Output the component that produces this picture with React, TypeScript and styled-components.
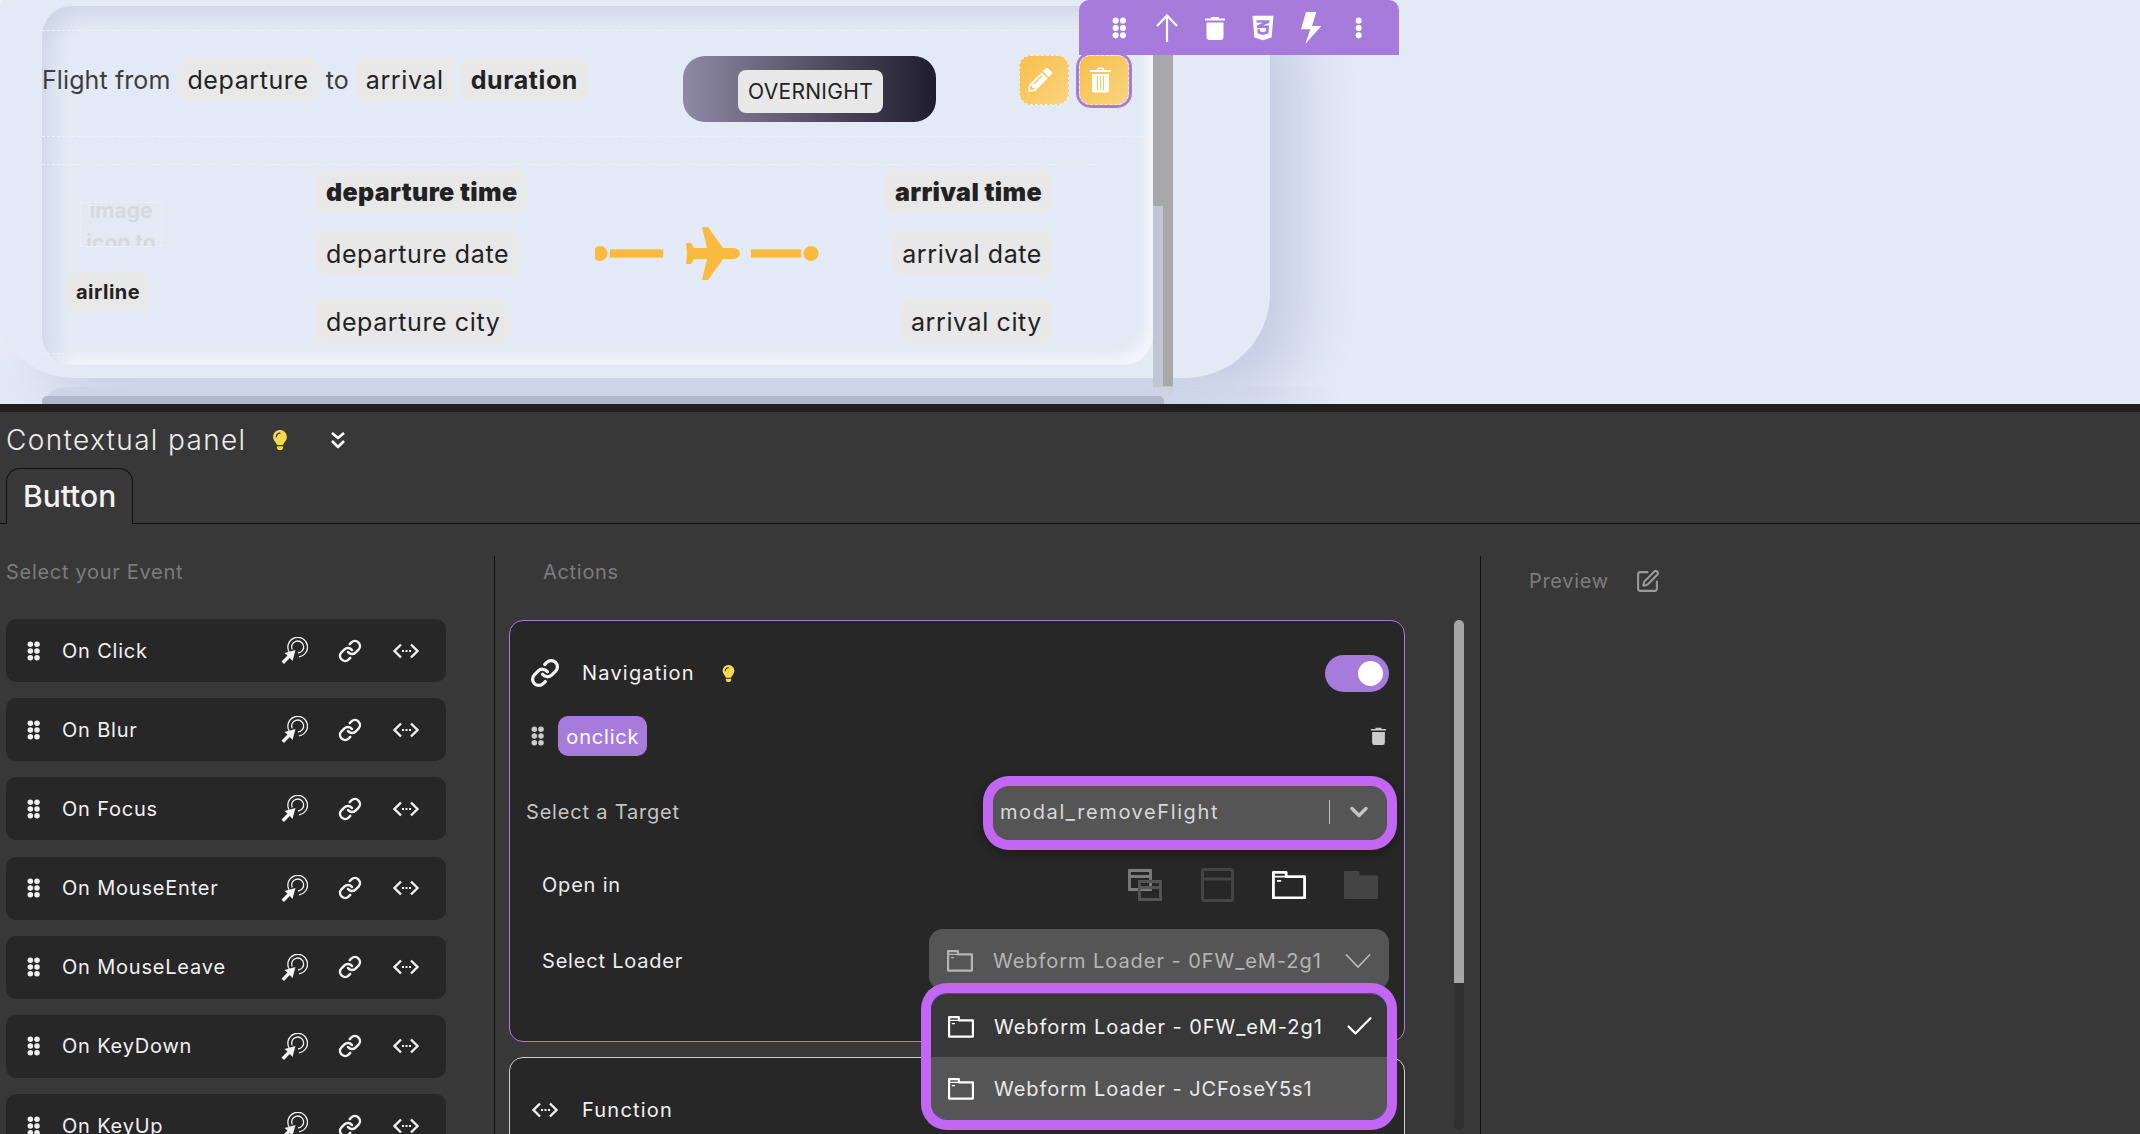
import React from "react";
import styled, { createGlobalStyle } from "styled-components";
import { Check, ChevronDown, Link as LinkIcon, SquarePen } from "lucide-react";
import { FaCss3Alt, FaLightbulb, FaPencilAlt } from "react-icons/fa";

const FONT = `Inter, "Liberation Sans", sans-serif`;
const PURPLE = "#a77bdc";
const HILITE = "#c266f3";
const AMBER = "#f8bb3f";
const GUIDE = "#edf0f7";

const GlobalStyle = createGlobalStyle`
  html, body { margin: 0; padding: 0; background: #383838; }
  * { box-sizing: border-box; }
  body { font-family: ${FONT}; }
`;

const Page = styled.div`
  width: 2140px;
  height: 1134px;
  overflow: hidden;
  display: flex;
  flex-direction: column;
`;

/* ---------- canvas ---------- */

const Canvas = styled.section`
  position: relative;
  height: 404px;
  flex: none;
  overflow: hidden;
  background: #e4eaf5;
`;

const OuterCard = styled.div`
  position: relative;
  width: 1280px;
  height: 418px;
  margin: -40px 0 0 -10px;
  padding: 46px 0 0 52px;
  display: flex;
  align-items: flex-start;
  border-radius: 85px;
  background: #e4eaf5;
  box-shadow: 34px 26px 60px #c6cde4, -14px -14px 40px #f7f9fd;
`;

const InnerCard = styled.div`
  width: 1111px;
  height: 359px;
  flex: none;
  border-radius: 30px;
  background: #e4eaf5;
  box-shadow: inset 14px 14px 22px -6px #cdd4e6, inset -8px -10px 10px -2px #f3f5fb;
`;

const Rail = styled.div<{ $thumb: number }>`
  width: 10px;
  height: 389px;
  flex: none;
  border-radius: 0 0 5px 5px;
  background: linear-gradient(#a8a8a8 0 ${(p) => p.$thumb}px, #c1c6d2 ${(p) => p.$thumb}px);
`;

const NextCard = styled.div`
  position: relative;
  width: 1300px;
  height: 40px;
  margin: 9px 0 0 42px;
  padding-top: 9px;
  border-radius: 24px 0 0 0;
  background: linear-gradient(90deg, #ced4e7 0 84%, rgba(206, 212, 231, 0) 100%);
`;

const HScroll = styled.div`
  width: 1122px;
  height: 12px;
  border-radius: 5px 5px 0 0;
  background: #b3b8c8;
`;

const HeaderRow = styled.div`
  height: 107px;
  margin-top: 24px;
  padding-top: 24px;
  display: flex;
  align-items: flex-start;
  border-top: 1px dashed ${GUIDE};
  border-bottom: 1px dashed ${GUIDE};
`;

const TitleLine = styled.div`
  width: 641px;
  flex: none;
  display: flex;
  align-items: center;
  gap: 7px;
  margin-top: 2px;
  font-size: 25px;
  letter-spacing: 0.1px;
  color: #3d3d3d;
`;

const Chip = styled.span<{ $bold?: boolean; $heavy?: boolean }>`
  display: inline-flex;
  align-items: center;
  height: 45px;
  padding: 0 10px;
  border-radius: 10px;
  background: #e8e8e8;
  color: #222;
  font-size: 25px;
  letter-spacing: ${(p) => (p.$heavy ? "0.35px" : "0.6px")};
  white-space: nowrap;
  font-weight: ${(p) => (p.$heavy ? 900 : p.$bold ? 700 : 400)};
`;

const Pill = styled.div`
  width: 253px;
  height: 66px;
  flex: none;
  margin-top: 1px;
  padding: 14px 0 0 2px;
  display: flex;
  justify-content: center;
  align-items: flex-start;
  border-radius: 22px;
  background: linear-gradient(90deg, #8e8aa4, #1f1c2c);
`;

const PillLabel = styled.span`
  width: 145px;
  height: 43px;
  display: flex;
  align-items: center;
  justify-content: center;
  border-radius: 8px;
  background: #e8e8e8;
  color: #222;
  font-size: 21px;
  letter-spacing: 0.3px;
`;

const ActionButtons = styled.div`
  display: flex;
  gap: 10px;
  margin-left: 83px;
`;

const AmberButton = styled.button<{ $selected?: boolean }>`
  width: 50px;
  height: 50px;
  padding: 0 8px 0 0;
  display: flex;
  align-items: center;
  justify-content: center;
  border: 1px dashed #f3f0e6;
  border-radius: 12px;
  color: #fff;
  background: linear-gradient(135deg, #f6bf4a, #fad47f);
  box-shadow: ${(p) => (p.$selected ? `0 0 0 3px ${PURPLE}` : "none")};
`;

const Toolbar = styled.div`
  position: absolute;
  top: 0;
  left: 1079px;
  width: 320px;
  height: 55px;
  padding: 0 16px;
  display: grid;
  grid-template-columns: repeat(6, 48px);
  align-items: center;
  justify-items: center;
  border-top-right-radius: 10px;
  border-top-left-radius: 10px;
  background: ${PURPLE};
  color: #fff;
`;

const FlightBody = styled.div`
  height: 190px;
  margin-top: 27px;
  padding-top: 4px;
  display: grid;
  grid-template-columns: 274px 279px 220px 237px;
  width: 1054px;
  border-top: 1px dashed ${GUIDE};
  border-bottom: 1px dashed ${GUIDE};
`;

const AirlineCol = styled.div`
  display: flex;
  flex-direction: column;
  align-items: flex-start;
`;

const ImageAlt = styled.div`
  width: 82px;
  height: 45px;
  margin: 33px 0 0 38px;
  overflow: hidden;
  text-align: center;
  color: #d6d9df;
  font-size: 21px;
  font-weight: 700;
  line-height: 32px;
  border: 1px dashed ${GUIDE};
`;

const ImageAltText = styled.div`
  margin-top: -8px;
`;

const AirlineChip = styled(Chip)`
  height: 39px;
  margin: 25px 0 0 24px;
  font-size: 20px;
  letter-spacing: 0.5px;
`;

const StopCol = styled.div<{ $end?: boolean }>`
  display: flex;
  flex-direction: column;
  align-items: ${(p) => (p.$end ? "flex-end" : "flex-start")};
`;

const StopGap = styled.div<{ $h: number }>`
  height: ${(p) => p.$h}px;
`;

const RouteArt = styled.div`
  padding-top: 58px;
  color: ${AMBER};
`;

/* ---------- panel ---------- */

const Strip = styled.div`
  height: 8px;
  flex: none;
  background: #1f1f1f;
`;

const Panel = styled.section`
  flex: 1;
  min-height: 0;
  overflow: hidden;
  background: #383838;
  color: #eee;
  letter-spacing: 0.8px;
`;

const PanelHead = styled.div`
  height: 56px;
  padding: 0 0 0 6px;
  display: flex;
  align-items: center;
`;

const PanelTitle = styled.h1`
  margin: 0;
  font-size: 28px;
  font-weight: 300;
  letter-spacing: 1.35px;
  color: #ececec;
`;

const HeadIcons = styled.div`
  display: flex;
  align-items: center;
  margin-left: 24px;
  gap: 40px;
`;

const TabBar = styled.div`
  height: 56px;
  padding-left: 6px;
  border-bottom: 1px solid #111;
`;

const Tab = styled.div`
  width: 127px;
  height: 56px;
  padding-left: 16px;
  display: flex;
  align-items: center;
  border: 1px solid #111;
  border-bottom: 1px solid #383838;
  border-radius: 14px 14px 0 0;
  font-size: 30px;
  font-weight: 500;
  letter-spacing: 0;
  color: #f2f2f2;
`;

const Columns = styled.div`
  display: flex;
  margin-top: 32px;
  height: 600px;
`;

const EventsCol = styled.div`
  width: 495px;
  flex: none;
  padding-left: 6px;
  border-right: 1px solid #111;
`;

const FaintLabel = styled.div`
  height: 32px;
  display: flex;
  align-items: center;
  font-size: 20px;
  letter-spacing: 0.7px;
  color: #7c7c7c;
`;

const EventList = styled.div`
  margin-top: 31px;
  display: flex;
  flex-direction: column;
  gap: 16.2px;
`;

const EventRow = styled.div`
  width: 440px;
  height: 63px;
  flex: none;
  padding-right: 12px;
  display: grid;
  grid-template-columns: 56px 1fr 56px 56px 56px;
  align-items: center;
  justify-items: center;
  border-radius: 10px;
  background: #272727;
  color: #f0f0f0;
  font-size: 20px;
`;

const EventName = styled.span`
  justify-self: start;
`;

const ActionsCol = styled.div`
  width: 986px;
  flex: none;
  border-right: 1px solid #111;
`;

const ActionsLabel = styled(FaintLabel)`
  padding-left: 48px;
`;

const ActionsBody = styled.div`
  margin-top: 32px;
  padding-left: 14px;
  display: flex;
  gap: 49px;
`;

const Cards = styled.div`
  width: 896px;
  flex: none;
  display: flex;
  flex-direction: column;
  gap: 15px;
`;

const ActionCard = styled.div<{ $active?: boolean }>`
  position: relative;
  flex: none;
  padding: 32px 15px 0 16px;
  border: 1px solid ${(p) => (p.$active ? PURPLE : "#cfcfcf")};
  border-radius: 14px;
  background: #272727;
  height: ${(p) => (p.$active ? "422px" : "200px")};
`;

const ScrollTrack = styled.div`
  width: 10px;
  height: 510px;
  flex: none;
  border-radius: 5px;
  background: linear-gradient(#a6a6a6 0 363px, #303030 363px);
`;

const NavHead = styled.div`
  height: 40px;
  display: flex;
  align-items: center;
  font-size: 20px;
  letter-spacing: 1.2px;
  color: #f2f2f2;
`;

const NavIconSlot = styled.span`
  width: 56px;
  flex: none;
  display: flex;
  padding-left: 4px;
`;

const NavBulb = styled.span`
  display: flex;
  margin-left: 25px;
`;

const Toggle = styled.span`
  width: 64px;
  height: 37px;
  margin-left: auto;
  padding: 6px;
  display: flex;
  justify-content: flex-end;
  border-radius: 19px;
  background: ${PURPLE};
`;

const ToggleKnob = styled.span`
  width: 25px;
  height: 25px;
  border-radius: 50%;
  background: #fff;
`;

const TriggerRow = styled.div`
  height: 40px;
  margin-top: 23px;
  display: flex;
  align-items: center;
  gap: 14px;
  padding-left: 5px;
  color: #ccc;
`;

const TriggerChip = styled.span`
  width: 89px;
  height: 40px;
  padding-top: 2px;
  display: flex;
  align-items: center;
  justify-content: center;
  border-radius: 10px;
  background: ${PURPLE};
  color: #fff;
  font-size: 20px;
`;

const TriggerTrash = styled.span`
  margin-left: auto;
  margin-right: 3px;
  display: flex;
`;

const FieldRow = styled.div<{ $top: number; $inset?: boolean }>`
  margin-top: ${(p) => p.$top}px;
  display: flex;
  align-items: center;
  justify-content: space-between;
  padding-left: ${(p) => (p.$inset ? "16px" : "0")};
  font-size: 20px;
  color: ${(p) => (p.$inset ? "#ededed" : "#c4c4c4")};
`;

const FieldLabel = styled.span<{ $shift: number }>`
  margin-top: ${(p) => p.$shift}px;
`;

const TargetSelect = styled.div`
  width: 394px;
  height: 54px;
  margin-right: 2px;
  padding: 0 14px 2px 7px;
  display: flex;
  align-items: center;
  border-radius: 16px;
  background: #555;
  color: #d8d8d8;
  font-size: 20px;
  letter-spacing: 1.6px;
  box-shadow: 0 0 0 10px ${HILITE}, 0 3px 12px 10px rgba(0, 0, 0, 0.35);
`;

const SelectSep = styled.span`
  width: 1px;
  height: 24px;
  margin-left: auto;
  margin-right: 15px;
  background: #c4c4c4;
`;

const OpenModes = styled.div`
  display: grid;
  grid-template-columns: repeat(4, 72px);
  justify-items: center;
  align-items: center;
  height: 36px;
  margin-right: -8px;
`;

const LoaderSelect = styled.div`
  position: relative;
  width: 460px;
  height: 61px;
  border-radius: 14px;
  background: #555;
`;

const LoaderLine = styled.div<{ $tone: string; $fill?: string; $dropped?: boolean }>`
  height: 100%;
  padding: 3px 18px 0 ${(p) => (p.$dropped ? 17 : 18)}px;
  display: flex;
  align-items: center;
  gap: 20px;
  font-size: 20px;
  letter-spacing: 0.95px;
  white-space: nowrap;
  color: ${(p) => p.$tone};
  background: ${(p) => p.$fill ?? "transparent"};
`;

const LoaderTail = styled.span`
  margin-left: auto;
  display: flex;
`;

const LoaderMenu = styled.div`
  position: absolute;
  top: 64px;
  left: 2px;
  z-index: 3;
  width: 456px;
  height: 127px;
  display: grid;
  grid-template-rows: 1fr 1fr;
  overflow: hidden;
  border-top: 1px solid #2255cc;
  border-bottom: 1px solid #2255cc;
  border-radius: 16px;
`;

const MenuRing = styled.div`
  position: absolute;
  top: 54px;
  left: -8px;
  z-index: 2;
  width: 476px;
  height: 147px;
  border-radius: 26px;
  background: ${HILITE};
`;

const PreviewCol = styled.div`
  padding: 9px 0 0 48px;
`;

const PreviewHead = styled(FaintLabel)`
  gap: 26px;
`;

/* ---------- drawn icons ---------- */

const Dots = ({ size = 18, rows = 3, cols = 2 }: { size?: number; rows?: number; cols?: number }) => (
  <svg width={(size * cols) / rows} height={size} viewBox={`0 0 ${cols * 6} 18`} fill="currentColor">
    {Array.from({ length: rows * cols }).map((_, i) => (
      <circle key={i} cx={3 + (i % cols) * 6} cy={3 + Math.floor(i / cols) * 6} r="2.5" />
    ))}
  </svg>
);

const ArrowIcon = () => (
  <svg width="22" height="28" viewBox="0 0 22 28" fill="none" stroke="currentColor" strokeWidth="2.2">
    <path d="M11 28V1.500M1 12L11 1.500 21 12" />
  </svg>
);

const SolidTrash = ({ width = 20 }: { width?: number }) => (
  <svg width={width} height={(width * 24) / 20} viewBox="0 0 20 24" fill="currentColor">
    <path d="M6 2.500V1h8v1.500h6v2H0v-2z" />
    <path d="M1.500 6.500h17V21a3 3 0 0 1-3 3h-11a3 3 0 0 1-3-3z" />
  </svg>
);

const BoltIcon = () => (
  <svg width="21" height="32" viewBox="0 0 21 32" fill="currentColor">
    <path d="M5 0h10.300L11 14h9.300L4.300 32l5-14.700H0z" />
  </svg>
);

const TrashLined = () => (
  <svg width="23" height="26" viewBox="0 0 23 26" fill="#fff">
    <path d="M8 3V2a1.500 1.500 0 0 1 1.500-1.500h4A1.500 1.500 0 0 1 15 2v1h7v2H1V3zM9.500 3h4V2h-4z" fillRule="evenodd" />
    <path d="M3 7h17v16.500a2 2 0 0 1-2 2H5a2 2 0 0 1-2-2z" />
    <path d="M8 9h1v14H8zM11 9h1v14h-1zM14 9h1v14h-1z" fill="#f8c860" />
  </svg>
);

const ChevronsIcon = () => (
  <svg width="16" height="18" viewBox="0 0 16 18" fill="none" stroke="#fff" strokeWidth="2.6" strokeLinejoin="round">
    <path d="M2 2l6 5 6-5M2 10l6 6 6-6" />
  </svg>
);

const ClickIcon = () => (
  <svg width="27" height="27" viewBox="0 0 27 27" fill="none" stroke="#f2f2f2" strokeWidth="1.300">
    <path d="M8.200 15A9.800 9.800 0 1 1 18 19.800" />
    <path d="M11.200 12.500A6 6 0 1 1 17 16" />
    <path d="M14.500 13l-3 11-2.700-3-5.800 6-2.500-2.500 6-6-3-2.500z" fill="#f2f2f2" stroke="none" />
  </svg>
);

const CodeIcon = ({ width = 28 }: { width?: number }) => (
  <svg width={width} height={16} viewBox="0 0 28 16" fill="none" stroke="#f2f2f2" strokeWidth="2.400">
    <path d="M9 1.500L2.500 8 9 14.500M19 1.500L25.500 8 19 14.500" />
    <path d="M10 8h9" strokeWidth="2" strokeDasharray="2 1.500" />
  </svg>
);

const FolderIcon = ({ color = "#fff", size = 24, filled }: { color?: string; size?: number; filled?: boolean }) => (
  <svg width={size} height={(size * 20) / 24} viewBox="0 0 24 20" fill={filled ? color : "none"} stroke={color} strokeWidth="2">
    <path d="M1 1h9v3h13v15H1z" strokeLinejoin="round" />
    <path d="M1 4h9M3.500 7h3" strokeWidth="1.300" />
  </svg>
);

const WindowIcon = () => (
  <svg width="33" height="34" viewBox="0 0 33 34" fill="none" stroke="#444" strokeWidth="3">
    <rect x="1.500" y="1.500" width="30" height="31" rx="1.500" />
    <path d="M1 11h31" />
  </svg>
);

const TwoWindowsIcon = () => (
  <svg width="34" height="32" viewBox="0 0 34 32" fill="none" strokeWidth="2.800">
    <path d="M1.500 1.500h21v19h-21zM1 7.500h22" stroke="#7c7c7c" />
    <path d="M11.500 12.500h21v18h-21zM11 18.500h22" stroke="#555" />
  </svg>
);

const ThinChevron = () => (
  <svg width="26" height="16" viewBox="0 0 26 16" fill="none" stroke="#bdbdbd" strokeWidth="1.600">
    <path d="M1 1.500L13 14 25 1.500" />
  </svg>
);

const RouteIcon = () => (
  <svg width="224" height="53" viewBox="0 0 224 53" fill="currentColor">
    <circle cx="5" cy="26.500" r="7.500" />
    <path d="M15 22.500h53v8H15zM156 22.500h50v8h-50z" stroke={AMBER} strokeWidth="0.500" strokeDasharray="1 1" />
    <circle cx="216" cy="26.500" r="7.500" />
    <path d="M107 0h6l15 21h10c4 0 7 2.500 7 5.500s-3 5.500-7 5.500h-10l-15 21h-6l5-21H99l-3 5h-5l1-10.500-1-10.500h5l3 5h13z" />
  </svg>
);

const LightBulb = ({ size = 20 }: { size?: number }) => <FaLightbulb size={size} color="#f5d94e" />;

const EVENTS = ["On Click", "On Blur", "On Focus", "On MouseEnter", "On MouseLeave", "On KeyDown", "On KeyUp"];

const App: React.FC = () => {
  return (
    <Page>
      <GlobalStyle />
      <Canvas>
        <OuterCard>
          <InnerCard>
            <HeaderRow>
              <TitleLine>
                Flight from
                <Chip>departure</Chip>
                to
                <Chip>arrival</Chip>
                <Chip $bold>duration</Chip>
              </TitleLine>
              <Pill>
                <PillLabel>OVERNIGHT</PillLabel>
              </Pill>
              <ActionButtons>
                <AmberButton>
                  <FaPencilAlt size={24} />
                </AmberButton>
                <AmberButton $selected>
                  <TrashLined />
                </AmberButton>
              </ActionButtons>
            </HeaderRow>
            <FlightBody>
              <AirlineCol>
                <ImageAlt>
                  <ImageAltText>image icon to</ImageAltText>
                </ImageAlt>
                <AirlineChip $bold>airline</AirlineChip>
              </AirlineCol>
              <StopCol>
                <Chip $heavy>departure time</Chip>
                <StopGap $h={17} />
                <Chip>departure date</Chip>
                <StopGap $h={23} />
                <Chip>departure city</Chip>
              </StopCol>
              <RouteArt>
                <RouteIcon />
              </RouteArt>
              <StopCol $end>
                <Chip $heavy>arrival time</Chip>
                <StopGap $h={17} />
                <Chip>arrival date</Chip>
                <StopGap $h={23} />
                <Chip>arrival city</Chip>
              </StopCol>
            </FlightBody>
          </InnerCard>
          <Rail $thumb={200} />
          <Rail $thumb={380} />
        </OuterCard>
        <NextCard>
          <HScroll />
        </NextCard>
        <Toolbar>
          <Dots size={22} />
          <ArrowIcon />
          <SolidTrash />
          <FaCss3Alt size={28} />
          <BoltIcon />
          <Dots size={22} cols={1} />
        </Toolbar>
      </Canvas>
      <Strip />
      <Panel>
        <PanelHead>
          <PanelTitle>Contextual panel</PanelTitle>
          <HeadIcons>
            <LightBulb />
            <ChevronsIcon />
          </HeadIcons>
        </PanelHead>
        <TabBar>
          <Tab>Button</Tab>
        </TabBar>
        <Columns>
          <EventsCol>
            <FaintLabel>Select your Event</FaintLabel>
            <EventList>
              {EVENTS.map((name) => (
                <EventRow key={name}>
                  <Dots size={20} />
                  <EventName>{name}</EventName>
                  <ClickIcon />
                  <LinkIcon size={24} strokeWidth={2.5} color="#f2f2f2" />
                  <CodeIcon />
                </EventRow>
              ))}
            </EventList>
          </EventsCol>
          <ActionsCol>
            <ActionsLabel>Actions</ActionsLabel>
            <ActionsBody>
              <Cards>
                <ActionCard $active>
                  <NavHead>
                    <NavIconSlot>
                      <LinkIcon size={30} strokeWidth={2.6} color="#f2f2f2" />
                    </NavIconSlot>
                    Navigation
                    <NavBulb>
                      <LightBulb size={17} />
                    </NavBulb>
                    <Toggle>
                      <ToggleKnob />
                    </Toggle>
                  </NavHead>
                  <TriggerRow>
                    <Dots size={20} />
                    <TriggerChip>onclick</TriggerChip>
                    <TriggerTrash>
                      <SolidTrash width={15} />
                    </TriggerTrash>
                  </TriggerRow>
                  <FieldRow $top={30}>
                    <FieldLabel $shift={-3}>Select a Target</FieldLabel>
                    <TargetSelect>
                      modal_removeFlight
                      <SelectSep />
                      <ChevronDown size={28} strokeWidth={3} color="#c4c4c4" />
                    </TargetSelect>
                  </FieldRow>
                  <FieldRow $top={27} $inset>
                    Open in
                    <OpenModes>
                      <TwoWindowsIcon />
                      <WindowIcon />
                      <FolderIcon size={34} />
                      <FolderIcon size={34} color="#444" filled />
                    </OpenModes>
                  </FieldRow>
                  <FieldRow $top={26} $inset>
                    <FieldLabel $shift={2}>Select Loader</FieldLabel>
                    <LoaderSelect>
                      <LoaderLine $tone="#b5b5b5">
                        <FolderIcon size={26} color="#b5b5b5" />
                        Webform Loader - 0FW_eM-2g1
                        <LoaderTail>
                          <ThinChevron />
                        </LoaderTail>
                      </LoaderLine>
                      <MenuRing />
                      <LoaderMenu>
                        <LoaderLine $tone="#f2f2f2" $fill="#383838" $dropped>
                          <FolderIcon size={26} />
                          Webform Loader - 0FW_eM-2g1
                          <LoaderTail>
                            <Check size={33} strokeWidth={1.6} color="#fff" />
                          </LoaderTail>
                        </LoaderLine>
                        <LoaderLine $tone="#e8e8e8" $fill="#555" $dropped>
                          <FolderIcon size={26} />
                          Webform Loader - JCFoseY5s1
                        </LoaderLine>
                      </LoaderMenu>
                    </LoaderSelect>
                  </FieldRow>
                </ActionCard>
                <ActionCard>
                  <NavHead>
                    <NavIconSlot>
                      <CodeIcon width={30} />
                    </NavIconSlot>
                    Function
                  </NavHead>
                </ActionCard>
              </Cards>
              <ScrollTrack />
            </ActionsBody>
          </ActionsCol>
          <PreviewCol>
            <PreviewHead>
              Preview
              <SquarePen size={25} color="#9a9a9a" />
            </PreviewHead>
          </PreviewCol>
        </Columns>
      </Panel>
    </Page>
  );
};

export default App;
